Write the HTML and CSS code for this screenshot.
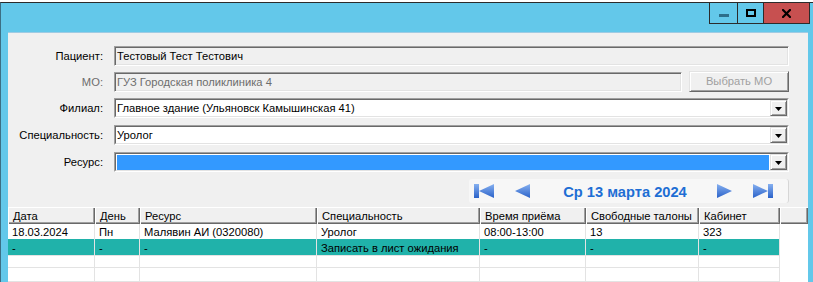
FILE: index.html
```html
<!DOCTYPE html>
<html lang="ru">
<head>
<meta charset="utf-8">
<title>Запись</title>
<link rel="stylesheet" href="styles.css">
</head>
<body>
<div class="window">
  <div class="titlebar">
    <div class="wbtns">
      <div class="wbtn min"><span class="min-ico"></span></div>
      <div class="wbtn max"><span class="max-ico"></span></div>
      <div class="wbtn close">
        <svg width="9" height="9" viewBox="0 0 9 9"><path d="M1 1 L8 8 M8 1 L1 8" stroke="#000" stroke-width="2.2" stroke-linecap="square"/></svg>
      </div>
    </div>
  </div>
  <div class="client">
    <div class="form">
      <div class="lbl">Пациент:</div>
      <div class="field ro"><span>Тестовый Тест Тестович</span></div>

      <div class="lbl dis">МО:</div>
      <div class="mo-row">
        <div class="field ro dis"><span>ГУЗ Городская поликлиника 4</span></div>
        <div class="btn">Выбрать МО</div>
      </div>

      <div class="lbl">Филиал:</div>
      <div class="combo"><div class="combo-in"><div class="ctext">Главное здание (Ульяновск Камышинская 41)</div><div class="dd"><svg width="7" height="4" viewBox="0 0 7 4"><path d="M0 0 H7 L3.5 4 Z" fill="#000"/></svg></div></div></div>

      <div class="lbl">Специальность:</div>
      <div class="combo"><div class="combo-in"><div class="ctext">Уролог</div><div class="dd"><svg width="7" height="4" viewBox="0 0 7 4"><path d="M0 0 H7 L3.5 4 Z" fill="#000"/></svg></div></div></div>

      <div class="lbl">Ресурс:</div>
      <div class="combo"><div class="combo-in"><div class="ctext sel"></div><div class="dd"><svg width="7" height="4" viewBox="0 0 7 4"><path d="M0 0 H7 L3.5 4 Z" fill="#000"/></svg></div></div></div>
    </div>

    <div class="navrow">
      <div class="nav">
        <svg class="ico first" width="20" height="14" viewBox="0 0 20 14">
          <defs><linearGradient id="g1" x1="0" y1="0" x2="0" y2="1"><stop offset="0" stop-color="#86b0f0"/><stop offset="1" stop-color="#2b62c9"/></linearGradient></defs>
          <rect x="0" y="0" width="5" height="14" fill="url(#g1)"/>
          <path d="M20 0 V14 L5 7 Z" fill="url(#g1)"/>
        </svg>
        <svg class="ico prev" width="15" height="14" viewBox="0 0 15 14">
          <defs><linearGradient id="g2" x1="0" y1="0" x2="0" y2="1"><stop offset="0" stop-color="#86b0f0"/><stop offset="1" stop-color="#2b62c9"/></linearGradient></defs>
          <path d="M15 0 V14 L0 7 Z" fill="url(#g2)"/>
        </svg>
        <span class="date">Ср 13 марта 2024</span>
        <svg class="ico next" width="15" height="14" viewBox="0 0 15 14">
          <defs><linearGradient id="g3" x1="0" y1="0" x2="0" y2="1"><stop offset="0" stop-color="#86b0f0"/><stop offset="1" stop-color="#2b62c9"/></linearGradient></defs>
          <path d="M0 0 V14 L15 7 Z" fill="url(#g3)"/>
        </svg>
        <svg class="ico last" width="20" height="14" viewBox="0 0 20 14">
          <defs><linearGradient id="g4" x1="0" y1="0" x2="0" y2="1"><stop offset="0" stop-color="#86b0f0"/><stop offset="1" stop-color="#2b62c9"/></linearGradient></defs>
          <path d="M0 0 V14 L15 7 Z" fill="url(#g4)"/>
          <rect x="15" y="0" width="5" height="14" fill="url(#g4)"/>
        </svg>
      </div>
    </div>

    <div class="grid">
      <div class="ghead">
        <div>Дата</div><div>День</div><div>Ресурс</div><div>Специальность</div><div>Время приёма</div><div>Свободные талоны</div><div>Кабинет</div><div></div>
      </div>
      <div class="grow">
        <div>18.03.2024</div><div>Пн</div><div>Малявин АИ (0320080)</div><div>Уролог</div><div>08:00-13:00</div><div>13</div><div>323</div>
      </div>
      <div class="grow wait">
        <div>-</div><div>-</div><div>-</div><div>Записать в лист ожидания</div><div>-</div><div>-</div><div>-</div>
      </div>
      <div class="grow empty">
        <div></div><div></div><div></div><div></div><div></div><div></div><div></div>
      </div>
      <div class="grow empty">
        <div></div><div></div><div></div><div></div><div></div><div></div><div></div>
      </div>
    </div>
  </div>
</div>
</body>
</html>
```
FILE: styles.css
```css
* { box-sizing: border-box; }
html, body { margin: 0; padding: 0; }
body {
  width: 813px;
  height: 282px;
  overflow: hidden;
  background: #ffffff;
  font-family: "Liberation Sans", Arial, sans-serif;
  font-size: 11.2px;
  color: #000;
}
.window {
  margin-top: 2px;
  height: 280px;
  overflow: hidden;
  border-top: 1px solid #2b2b2b;
  border-left: 1px solid #3c6f84;
  background: #63c8ea;
  padding: 0 5px 0 7px;
}
.titlebar {
  height: 29px;
  display: flex;
  justify-content: flex-end;
  margin-right: -2px;
}
.wbtns {
  display: flex;
  height: 22px;
  margin-top: -1px;
  border: 1px solid #2b2b2b;
}
.wbtn {
  height: 100%;
  display: flex;
  align-items: center;
  justify-content: center;
}
.min { width: 28px; border-right: 1px solid #2b2b2b; }
.max { width: 26px; border-right: 1px solid #2b2b2b; }
.close { width: 45px; background: #c75050; }
.min-ico { width: 10px; height: 3px; background: #2d6e8a; margin-top: 4px; }
.max-ico { width: 10px; height: 8px; border: 2px solid #000; }

.client {
  background: #f0f0f0;
  border-top: 1px solid #9fcbe3;
  height: 250px;
  overflow: hidden;
  padding-top: 13px;
}
.form {
  display: grid;
  grid-template-columns: 95px 1fr;
  grid-template-rows: 26px 26px 27px 27px 20px;
  column-gap: 11px;
  padding-right: 19px;
  align-items: start;
}
.lbl {
  height: 20px;
  display: flex;
  align-items: center;
  justify-content: flex-end;
  line-height: 13px;
  white-space: nowrap;
}
.lbl.dis { color: #6d6d6d; }
.field {
  height: 20px;
  border: 1px solid;
  border-color: #a0a0a0 #ffffff #ffffff #a0a0a0;
  box-shadow: inset 1px 1px #696969, inset -1px -1px #e3e3e3;
  padding: 0 2px;
  display: flex;
  align-items: center;
  line-height: 13px;
  white-space: nowrap;
}
.field.ro { background: #f0f0f0; }
.field.dis { color: #6d6d6d; }
.mo-row { display: flex; gap: 7px; }
.mo-row .field { flex: 1; }
.btn {
  width: 100px;
  height: 21px;
  margin-top: -1px;
  background: #f0f0f0;
  border: 1px solid;
  border-color: #e3e3e3 #696969 #696969 #e3e3e3;
  box-shadow: inset 1px 1px #ffffff, inset -1px -1px #a0a0a0;
  color: #a0a0a0;
  display: flex;
  align-items: center;
  justify-content: center;
  line-height: 13px;
}
.combo {
  height: 20px;
  border: 1px solid;
  border-color: #a0a0a0 #ffffff #ffffff #a0a0a0;
  background: #fff;
}
.combo-in {
  height: 100%;
  border: 1px solid;
  border-color: #696969 #e3e3e3 #e3e3e3 #696969;
  display: flex;
}
.ctext {
  flex: 1;
  padding-left: 1px;
  line-height: 16px;
  white-space: nowrap;
  overflow: hidden;
}
.ctext.sel { background: #3399ff; margin: 1px 1px 0 1px; }
.dd {
  width: 17px;
  height: 16px;
  background: #f0f0f0;
  border: 1px solid;
  border-color: #e3e3e3 #696969 #696969 #e3e3e3;
  box-shadow: inset 1px 1px #ffffff, inset -1px -1px #a0a0a0;
  display: flex;
  align-items: center;
  justify-content: center;
}
.dd svg { display: block; margin-top: 1px; }

.navrow {
  display: flex;
  justify-content: flex-end;
  padding-right: 19px;
  margin-top: 7px;
}
.nav {
  width: 320px;
  height: 24px;
  background: #f7f7f7;
  border-right: 1px solid #d6d6d6;
  border-radius: 3px;
  display: flex;
  align-items: center;
  padding-left: 5px;
}
.ico { display: block; flex: none; }
.prev { margin-left: 21px; }
.date {
  margin-left: 33px;
  width: 124px;
  text-align: center;
  font-weight: bold;
  font-size: 14.67px;
  color: #1e6ed4;
  white-space: nowrap;
  line-height: 17px;
  margin-top: 2px;
}
.next { margin-left: 30px; }
.last { margin-left: 21px; }

.grid {
  margin-top: 4px;
  background: #ffffff;
  height: 80px;
}
.ghead {
  display: grid;
  grid-template-columns: 87px 45px 177px 163px 106px 113px 81px 1fr;
  height: 17px;
  background: #f0f0f0;
}
.ghead > div {
  box-shadow: inset 1px 1px #ffffff, inset -1px -1px #696969, inset -2px -2px #a0a0a0;
  padding: 3px 0 0 5px;
  line-height: 13px;
  white-space: nowrap;
  overflow: hidden;
}
.grow {
  display: grid;
  grid-template-columns: 87px 45px 177px 163px 106px 113px 81px;
  width: 772px;
  height: 15px;
}
.grow > div {
  border-right: 1px solid #e3e3e3;
  border-bottom: 1px solid #e3e3e3;
  padding: 2px 0 0 4px;
  line-height: 13px;
  white-space: nowrap;
}
.grow.wait > div { background: #20b2aa; padding-top: 3px; }
.grow.empty { height: 14px; }
```
